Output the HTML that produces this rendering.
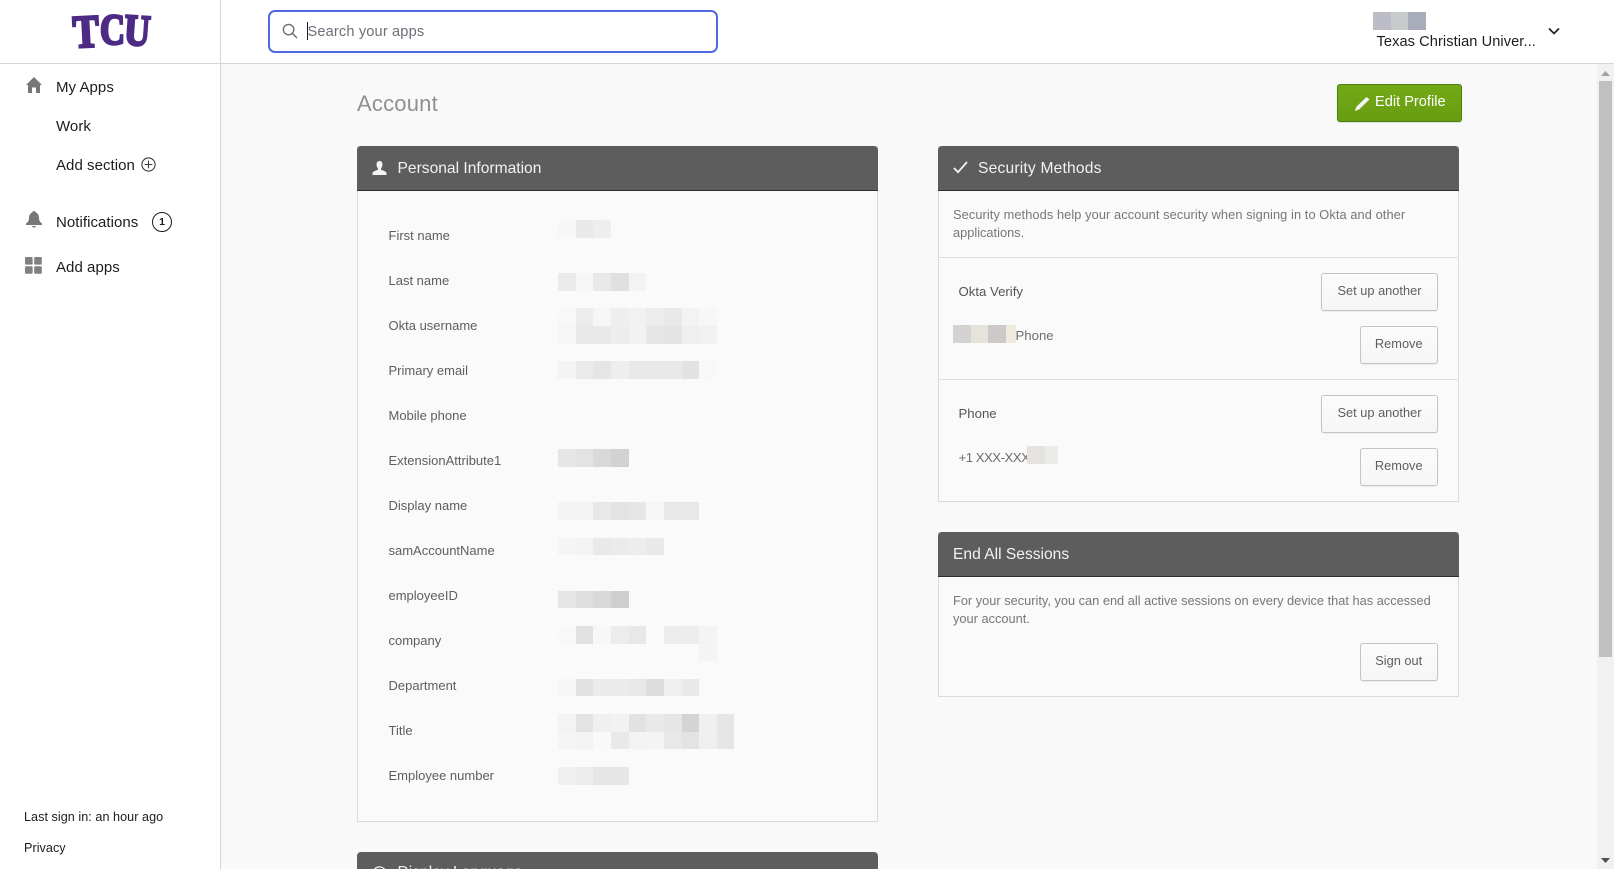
<!DOCTYPE html>
<html lang="en">
<head>
<meta charset="utf-8">
<title>Account</title>
<style>
html,body{margin:0;padding:0;width:1614px;height:869px;overflow:hidden;background:#f9f9f9;font-family:"Liberation Sans",sans-serif}
.a{position:absolute}
.t{position:absolute;white-space:nowrap;line-height:20px;height:20px}
.nav{font-size:15px;color:#1d1d21;letter-spacing:.05px}
.lb{font-size:13px;color:#5e5e5e;left:388.5px}
.ph{font-size:15.6px;color:#f2f2f2}
.d{font-size:12.8px;color:#777;left:953px}
.n{font-size:13.2px;color:#555}
.panel{position:absolute;background:#fafafa;border:1px solid #dadada;box-sizing:border-box}
.head{position:absolute;background:#5d5d5d;border-radius:4px 4px 0 0;height:44px;border-bottom:1px solid #2f2f2f;box-sizing:content-box}
.btn{position:absolute;box-sizing:border-box;height:38px;border:1px solid #c4c4c4;border-radius:3px;background:linear-gradient(#fbfbfb,#f6f6f6);color:#5e5e5e;font-size:12.8px;line-height:34px;text-align:center;box-shadow:0 1px 1px rgba(0,0,0,.06);white-space:nowrap}
.hr{position:absolute;height:1px;background:#dedede}
</style>
</head>
<body>

<!-- top bar and sidebar -->
<div class="a" style="left:0;top:0;width:1614px;height:63px;background:#fff;border-bottom:1px solid #d6d6d6"></div>
<div class="a" style="left:0;top:0;width:220px;height:869px;background:#fff;border-right:1px solid #d6d6d6"></div>
<div class="a" style="left:0;top:63px;width:220px;height:1px;background:#d6d6d6"></div>

<!-- logo -->
<svg class="a" style="left:68px;top:8px" width="86" height="46" viewBox="0 0 86 46">
  <g font-family="Liberation Serif" font-weight="700" fill="#4d2a84" stroke="#4d2a84" stroke-width="2.6" stroke-linejoin="miter">
    <text x="5" y="39" font-size="46" textLength="26" lengthAdjust="spacingAndGlyphs" transform="rotate(-3 18 26)">T</text>
    <text x="32" y="36" font-size="43" textLength="25" lengthAdjust="spacingAndGlyphs">C</text>
    <text x="56" y="37" font-size="44" textLength="26" lengthAdjust="spacingAndGlyphs" transform="rotate(4 69 26)">U</text>
  </g>
</svg>

<!-- search -->
<div class="a" style="left:268px;top:10px;width:450px;height:43px;box-sizing:border-box;border:2px solid #5068e0;border-radius:7px;background:#fff"></div>
<svg class="a" style="left:282px;top:23px" width="16" height="16" viewBox="0 0 16 16" fill="none" stroke="#6e6e78" stroke-width="1.4"><circle cx="6.6" cy="6.6" r="5.2"/><path d="M10.5 10.5L15 15"/></svg>
<div class="a" style="left:307px;top:22px;width:1px;height:18px;background:#1d1d21"></div>
<div class="t" style="left:307.5px;top:22px;font-size:14.6px;color:#6e6e78;letter-spacing:.15px">Search your apps</div>

<!-- org -->
<div class="a" style="left:1373px;top:12px;width:18px;height:18px;background:#bcbdc7"></div>
<div class="a" style="left:1391px;top:12px;width:17px;height:18px;background:#c8cbcc"></div>
<div class="a" style="left:1408px;top:12px;width:18px;height:18px;background:#a9adb9"></div>
<div class="t" style="left:1376.5px;top:32px;font-size:14.6px;color:#1d1d21;letter-spacing:.08px">Texas Christian Univer...</div>
<svg class="a" style="left:1548px;top:26px" width="12" height="10" viewBox="0 0 12 10" fill="none" stroke="#1d1d21" stroke-width="1.6"><path d="M1 2.5L6 7.5L11 2.5"/></svg>

<!-- sidebar nav -->
<svg class="a" style="left:26px;top:77px" width="16" height="16" viewBox="0 0 16 16" fill="#777"><path d="M8 0L16 8H14V16H10V10.5H6V16H2V8H0Z"/></svg>
<div class="t nav" style="left:56px;top:78px">My Apps</div>
<div class="t nav" style="left:56px;top:117px">Work</div>
<div class="t nav" style="left:56px;top:155.5px">Add section</div>
<svg class="a" style="left:141px;top:157px" width="15" height="15" viewBox="0 0 15 15" fill="none" stroke="#3a3a40" stroke-width="1.1"><circle cx="7.5" cy="7.5" r="6.6"/><path d="M7.5 3.6V11.4M3.6 7.5H11.4"/></svg>
<svg class="a" style="left:26px;top:211px" width="16" height="17" viewBox="0 0 16 17" fill="#777"><path d="M8 0C9 0 9.5.6 9.6 1.4 12 2.2 13 4.5 13 7 13 10 14.5 11.5 16 12.5V14H0V12.5C1.5 11.5 3 10 3 7 3 4.5 4 2.2 6.4 1.4 6.5.6 7 0 8 0ZM6 15H10C10 16 9 16.5 8 16.5S6 16 6 15Z"/></svg>
<div class="t nav" style="left:56px;top:213px">Notifications</div>
<div class="a" style="left:152px;top:212px;width:20px;height:20px;box-sizing:border-box;border:1.3px solid #1d1d21;border-radius:50%;font-size:10.5px;line-height:18px;text-align:center;color:#1d1d21;font-weight:700">1</div>
<svg class="a" style="left:25px;top:257px" width="17" height="17" viewBox="0 0 17 17" fill="#808080"><rect width="7.6" height="7.6" rx="1"/><rect x="9.2" width="7.6" height="7.6" rx="1"/><rect y="9.2" width="7.6" height="7.6" rx="1"/><rect x="9.2" y="9.2" width="7.6" height="7.6" rx="1"/></svg>
<div class="t nav" style="left:56px;top:258px">Add apps</div>
<div class="t" style="left:24px;top:807px;font-size:12.6px;color:#1d1d21;letter-spacing:.05px">Last sign in: an hour ago</div>
<div class="t" style="left:24px;top:838px;font-size:12.6px;color:#1d1d21;letter-spacing:.05px">Privacy</div>

<!-- heading -->
<div class="t" style="left:357px;top:94px;font-size:22px;color:#909090;letter-spacing:.2px">Account</div>
<div class="a" style="left:1337px;top:84px;width:125px;height:38px;box-sizing:border-box;background:linear-gradient(#72aa16,#689c11);border:1px solid #4f7f0c;border-radius:3px;box-shadow:0 1px 1px rgba(0,0,0,.12)"></div>
<svg class="a" style="left:1354px;top:97px" width="16" height="14" viewBox="0 0 16 14" fill="#f4f4f4"><path d="M12.5 0L15.5 2.4 5.2 12.4 .8 14 2.4 9.8Z"/></svg>
<div class="t" style="left:1375px;top:92px;font-size:14.6px;color:#fff">Edit Profile</div>

<!-- personal info panel -->
<div class="panel" style="left:357px;top:146px;width:521px;height:676px"></div>
<div class="head" style="left:357px;top:146px;width:521px"></div>
<svg class="a" style="left:372px;top:161px" width="15" height="14" viewBox="0 0 15 14" fill="#f4f4f4"><path d="M7.5 0C9.5 0 10.5 1.5 10.5 3.5 10.5 5.3 9.6 6.8 9 7.5V8.8C11 9.6 14 10.3 14.5 12V14H.5V12C1 10.3 4 9.6 6 8.8V7.5C5.4 6.8 4.5 5.3 4.5 3.5 4.5 1.5 5.5 0 7.5 0Z"/></svg>
<div class="t ph" style="left:397.5px;top:159px">Personal Information</div>

<div class="t lb" style="top:226px">First name</div>
<div class="t lb" style="top:271px">Last name</div>
<div class="t lb" style="top:316px">Okta username</div>
<div class="t lb" style="top:361px">Primary email</div>
<div class="t lb" style="top:406px">Mobile phone</div>
<div class="t lb" style="top:451px">ExtensionAttribute1</div>
<div class="t lb" style="top:496px">Display name</div>
<div class="t lb" style="top:541px">samAccountName</div>
<div class="t lb" style="top:586px">employeeID</div>
<div class="t lb" style="top:631px">company</div>
<div class="t lb" style="top:676px">Department</div>
<div class="t lb" style="top:721px">Title</div>
<div class="t lb" style="top:766px">Employee number</div>

<!-- mosaic -->
<svg class="a" style="left:0;top:0" width="1614" height="869" shape-rendering="crispEdges">
<g transform="translate(0,220)"><rect x="558" width="18" height="18" fill="#f7f7f7"/><rect x="576" width="17" height="18" fill="#e9e9e9"/><rect x="593" width="18" height="18" fill="#eee"/></g>
<g transform="translate(0,273)"><rect x="558" width="18" height="18" fill="#ebebeb"/><rect x="576" width="17" height="18" fill="#f6f6f6"/><rect x="593" width="18" height="18" fill="#e9e9e9"/><rect x="611" width="18" height="18" fill="#e0e0e0"/><rect x="629" width="17" height="18" fill="#f3f3f3"/></g>
<g transform="translate(0,308)"><rect x="558" width="18" height="18" fill="#f8f8f8"/><rect x="576" width="17" height="18" fill="#ececec"/><rect x="593" width="18" height="18" fill="#f6f6f6"/><rect x="611" width="18" height="18" fill="#eee"/><rect x="629" width="17" height="18" fill="#f1f1f1"/><rect x="646" width="18" height="18" fill="#ececec"/><rect x="664" width="18" height="18" fill="#e9e9e9"/><rect x="682" width="17" height="18" fill="#f3f3f3"/><rect x="699" width="18" height="18" fill="#f7f7f7"/></g>
<g transform="translate(0,326)"><rect x="558" width="18" height="18" fill="#f6f6f6"/><rect x="576" width="17" height="18" fill="#e9e9e9"/><rect x="593" width="18" height="18" fill="#e9e9e9"/><rect x="611" width="18" height="18" fill="#ededed"/><rect x="629" width="17" height="18" fill="#f2f2f2"/><rect x="646" width="18" height="18" fill="#e6e6e6"/><rect x="664" width="18" height="18" fill="#e4e4e4"/><rect x="682" width="17" height="18" fill="#efefef"/><rect x="699" width="18" height="18" fill="#f1f1f1"/></g>
<g transform="translate(0,361)"><rect x="558" width="18" height="18" fill="#f4f4f4"/><rect x="576" width="17" height="18" fill="#eaeaea"/><rect x="593" width="18" height="18" fill="#e5e5e5"/><rect x="611" width="18" height="18" fill="#eee"/><rect x="629" width="17" height="18" fill="#e9e9e9"/><rect x="646" width="18" height="18" fill="#e9e9e9"/><rect x="664" width="18" height="18" fill="#e9e9e9"/><rect x="682" width="17" height="18" fill="#e2e2e2"/><rect x="699" width="18" height="18" fill="#f8f8f8"/></g>
<g transform="translate(0,449)"><rect x="558" width="18" height="18" fill="#e6e6e6"/><rect x="576" width="17" height="18" fill="#e3e3e3"/><rect x="593" width="18" height="18" fill="#d9d9d9"/><rect x="611" width="18" height="18" fill="#d2d2d2"/></g>
<g transform="translate(0,502)"><rect x="558" width="18" height="18" fill="#f4f4f4"/><rect x="576" width="17" height="18" fill="#f4f4f4"/><rect x="593" width="18" height="18" fill="#e8e8e8"/><rect x="611" width="18" height="18" fill="#e3e3e3"/><rect x="629" width="17" height="18" fill="#e6e6e6"/><rect x="646" width="18" height="18" fill="#f6f6f6"/><rect x="664" width="18" height="18" fill="#e8e8e8"/><rect x="682" width="17" height="18" fill="#e8e8e8"/></g>
<g transform="translate(0,538)"><rect x="558" width="18" height="17" fill="#f5f5f5"/><rect x="576" width="17" height="17" fill="#f3f3f3"/><rect x="593" width="18" height="17" fill="#e9e9e9"/><rect x="611" width="18" height="17" fill="#ebebeb"/><rect x="629" width="17" height="17" fill="#ededed"/><rect x="646" width="18" height="17" fill="#e9e9e9"/></g>
<g transform="translate(0,591)"><rect x="558" width="18" height="17" fill="#e6e6e6"/><rect x="576" width="17" height="17" fill="#dedede"/><rect x="593" width="18" height="17" fill="#d9d9d9"/><rect x="611" width="18" height="17" fill="#cfcfcf"/></g>
<g transform="translate(0,626)"><rect x="558" width="18" height="18" fill="#f8f8f8"/><rect x="576" width="17" height="18" fill="#e1e1e1"/><rect x="593" width="18" height="18" fill="#f7f7f7"/><rect x="611" width="18" height="18" fill="#ececec"/><rect x="629" width="17" height="18" fill="#e8e8e8"/><rect x="664" width="18" height="18" fill="#ececec"/><rect x="682" width="17" height="18" fill="#ededed"/><rect x="699" width="18" height="35" fill="#f4f4f4"/></g>
<g transform="translate(0,679)"><rect x="558" width="18" height="17" fill="#f6f6f6"/><rect x="576" width="17" height="17" fill="#e1e1e1"/><rect x="593" width="18" height="17" fill="#ebebeb"/><rect x="611" width="18" height="17" fill="#ebebeb"/><rect x="629" width="17" height="17" fill="#e8e8e8"/><rect x="646" width="18" height="17" fill="#ddd"/><rect x="664" width="18" height="17" fill="#f0f0f0"/><rect x="682" width="17" height="17" fill="#e9e9e9"/></g>
<g transform="translate(0,714)"><rect x="558" width="18" height="18" fill="#f3f3f3"/><rect x="576" width="17" height="18" fill="#e3e3e3"/><rect x="593" width="18" height="18" fill="#f0f0f0"/><rect x="611" width="18" height="18" fill="#f2f2f2"/><rect x="629" width="17" height="18" fill="#e2e2e2"/><rect x="646" width="18" height="18" fill="#e9e9e9"/><rect x="664" width="18" height="18" fill="#e6e6e6"/><rect x="682" width="17" height="18" fill="#d4d4d4"/><rect x="699" width="18" height="18" fill="#f0f0f0"/><rect x="717" width="17" height="18" fill="#e6e6e6"/></g>
<g transform="translate(0,732)"><rect x="558" width="18" height="17" fill="#f5f5f5"/><rect x="576" width="17" height="17" fill="#f3f3f3"/><rect x="593" width="18" height="17" fill="#f9f9f9"/><rect x="611" width="18" height="17" fill="#e9e9e9"/><rect x="629" width="17" height="17" fill="#f3f3f3"/><rect x="646" width="18" height="17" fill="#f4f4f4"/><rect x="664" width="18" height="17" fill="#e8e8e8"/><rect x="682" width="17" height="17" fill="#e3e3e3"/><rect x="699" width="18" height="17" fill="#efefef"/><rect x="717" width="17" height="17" fill="#e6e6e6"/></g>
<g transform="translate(0,767)"><rect x="558" width="18" height="18" fill="#f0f0f0"/><rect x="576" width="17" height="18" fill="#ececec"/><rect x="593" width="18" height="18" fill="#e6e6e6"/><rect x="611" width="18" height="18" fill="#e6e6e6"/></g>
</svg>

<!-- next panel peeking -->
<div class="a" style="left:357px;top:852px;width:521px;height:17px;background:#5d5d5d;border-radius:4px 4px 0 0;overflow:hidden">
  <svg class="a" style="left:15px;top:14px" width="15" height="15" viewBox="0 0 15 15" fill="none" stroke="#f2f2f2" stroke-width="1.2"><circle cx="7.5" cy="7.5" r="6.6"/></svg>
  <div class="t ph" style="left:40.5px;top:11px">Display Language</div>
</div>

<!-- security methods -->
<div class="panel" style="left:938px;top:146px;width:521px;height:356px"></div>
<div class="head" style="left:938px;top:146px;width:521px"></div>
<svg class="a" style="left:953px;top:161px" width="15" height="13" viewBox="0 0 15 13" fill="none" stroke="#f4f4f4" stroke-width="1.8"><path d="M1 7L5 11.2L14 1"/></svg>
<div class="t ph" style="left:978px;top:159px;letter-spacing:.2px">Security Methods</div>
<div class="t d" style="top:205px;letter-spacing:.09px">Security methods help your account security when signing in to Okta and other</div>
<div class="t d" style="top:223px">applications.</div>
<div class="hr" style="left:939px;top:257px;width:519px"></div>
<div class="t n" style="left:958.5px;top:281.5px">Okta Verify</div>
<div class="btn" style="left:1321px;top:273px;width:117px">Set up another</div>
<div class="btn" style="left:1359.5px;top:326px;width:78.5px">Remove</div>
<div class="a" style="left:953px;top:325px;width:18px;height:18px;background:#d5d3d2"></div>
<div class="a" style="left:971px;top:325px;width:17px;height:18px;background:#e4e4da"></div>
<div class="a" style="left:988px;top:325px;width:18px;height:18px;background:#cdc9c9"></div>
<div class="a" style="left:1006px;top:325px;width:10px;height:18px;background:#f0e9dd"></div>
<div class="t n" style="left:1015.5px;top:325.5px;color:#6e6e6e">Phone</div>
<div class="hr" style="left:939px;top:379px;width:519px"></div>
<div class="t n" style="left:958.5px;top:403.5px">Phone</div>
<div class="btn" style="left:1321px;top:395px;width:117px">Set up another</div>
<div class="btn" style="left:1359.5px;top:448px;width:78.5px">Remove</div>
<div class="t n" style="left:958.5px;top:447.5px;color:#6e6e6e;letter-spacing:-.5px">+1 XXX-XXX</div>
<div class="a" style="left:1027px;top:446px;width:18px;height:18px;background:#e5e2e0"></div>
<div class="a" style="left:1045px;top:446px;width:13px;height:18px;background:#ecece6"></div>

<!-- end sessions -->
<div class="panel" style="left:938px;top:532px;width:521px;height:165px"></div>
<div class="head" style="left:938px;top:532px;width:521px"></div>
<div class="t ph" style="left:953px;top:544.5px">End All Sessions</div>
<div class="t d" style="top:591px">For your security, you can end all active sessions on every device that has accessed</div>
<div class="t d" style="top:609px">your account.</div>
<div class="btn" style="left:1359.5px;top:643px;width:78.5px">Sign out</div>

<!-- scrollbar -->
<div class="a" style="left:1597px;top:64px;width:17px;height:805px;background:#f1f1f1"></div>
<div class="a" style="left:1599px;top:81px;width:13px;height:576px;background:#c0c0c0"></div>
<svg class="a" style="left:1601px;top:71px" width="9" height="5" viewBox="0 0 9 5" fill="#a3a3a3"><path d="M4.5 0L9 5H0Z"/></svg>
<svg class="a" style="left:1601px;top:858px" width="9" height="5" viewBox="0 0 9 5" fill="#505050"><path d="M0 0H9L4.5 5Z"/></svg>

</body>
</html>
